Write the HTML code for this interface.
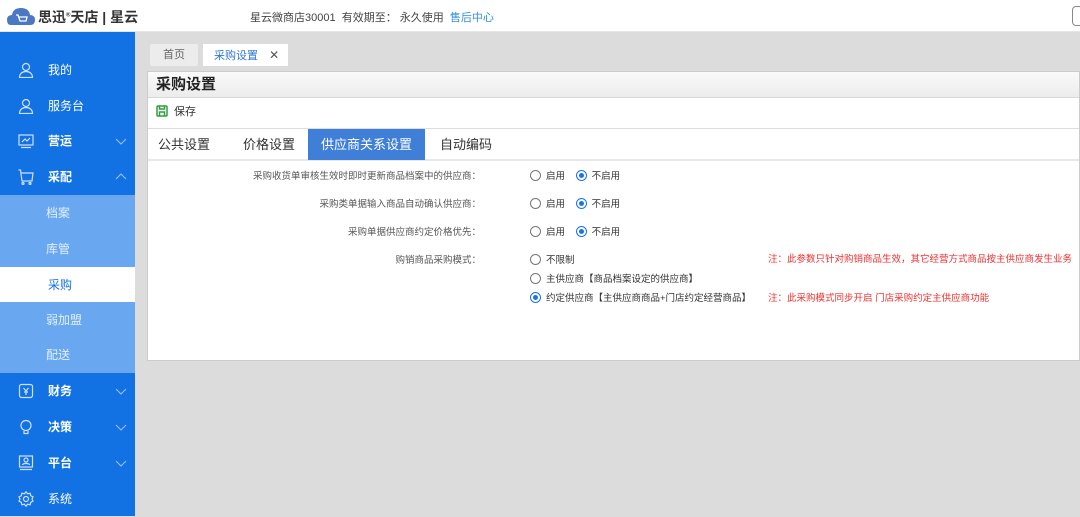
<!DOCTYPE html>
<html><head><meta charset="utf-8"><style>
*{margin:0;padding:0;box-sizing:border-box}
body{width:1080px;height:516px;overflow:hidden;background:#dcdcdc;font-family:"Liberation Sans","Noto Sans CJK SC",sans-serif;position:relative}
.hdr{position:absolute;left:0;top:0;width:1080px;height:32px;background:#fff;border-bottom:1px solid #e6e6e6}
.logo{position:absolute;left:7px;top:7px;font-size:14px;font-weight:bold;color:#333;display:flex;align-items:center;gap:3px}
.info{position:absolute;left:250px;top:9px;font-size:11px;color:#444}
.info span{color:#2f8fd8}
.side{position:absolute;left:0;top:32px;width:135px;height:484px;background:#1272e4}
.it{position:absolute;left:0;width:135px;height:36px;color:#fff;font-size:12px;line-height:36px}
.it .t{position:absolute;left:48px}
.it.sub{background:#69a8f0;color:#e3efff}
.it.sub .t{left:46px}
.it.act{background:#fff;color:#1272e4}
.it.b .t{font-weight:bold}
.ic{position:absolute;left:18px;top:10px;width:16px;height:16px}
.ar{position:absolute;left:115px;top:12px;width:12px;height:12px}
.tab{position:absolute;top:44px;height:22px;font-size:11px;line-height:22px;text-align:center}
.panel{position:absolute;left:147px;top:71px;width:933px;height:290px;background:#fff;border:1px solid #ccc}
.title{height:26px;background:linear-gradient(#fafafa,#ececec);border-bottom:1px solid #d8d8d8;font-size:15px;font-weight:bold;color:#222;padding-left:8px;line-height:26px}
.save{height:31px;border-bottom:1px solid #ddd;font-size:11px;color:#333;line-height:28px;padding-left:26px;position:relative}
.tabs{height:32px;border-bottom:2px solid #e8e8e8;position:relative}
.tabs div{position:absolute;top:0;height:31px;line-height:31px;font-size:13px;color:#333;text-align:center}
.lbl{position:absolute;right:600px;font-size:9.5px;color:#555;text-align:right;white-space:nowrap}
.r{position:absolute;font-size:9.5px;color:#333;white-space:nowrap}
.rd{display:inline-block;width:11px;height:11px;border:1px solid #777;border-radius:50%;vertical-align:-2px;margin-right:5px;background:#fff;position:relative}
.rd.on{border-color:#1a73e8}
.rd.on::after{content:"";position:absolute;left:2px;top:2px;width:5px;height:5px;border-radius:50%;background:#1a73e8}
.note{position:absolute;font-size:9.5px;color:#f03030;white-space:nowrap}
</style></head><body>
<div class="hdr">
 <div class="logo"><svg width="28" height="20" viewBox="0 0 28 20"><path d="M4 18 Q0 18 0 13 Q0 8 5 8 Q6 1 14 1 Q22 1 23 8 Q28 8 28 13 Q28 18 23 18Z" fill="#4a78c4"/><path d="M9 8h2l2 6h6l1-4h-8" stroke="#fff" stroke-width="1.3" fill="none"/></svg><span>思迅<sup style="font-size:6px">®</sup>天店 | 星云</span></div>
 <div class="info">星云微商店30001 &nbsp;有效期至： 永久使用 &nbsp;<span>售后中心</span></div>
 <div style="position:absolute;left:1072px;top:6px;width:12px;height:20px;border:1px solid #888;border-radius:4px"></div>
</div>
<div class="side">
 <div class="it" style="top:20px"><svg class="ic" viewBox="0 0 16 16" fill="none" stroke="#cfe0ff" stroke-width="1.2"><circle cx="8" cy="5" r="3.5"/><path d="M1.5 15.5c0-4 3-6 6.5-6s6.5 2 6.5 6z"/></svg><span class="t">我的</span></div>
 <div class="it" style="top:56px"><svg class="ic" viewBox="0 0 16 16" fill="none" stroke="#cfe0ff" stroke-width="1.2"><circle cx="8" cy="5" r="3.5"/><path d="M1.5 15.5c0-4 3-6 6.5-6s6.5 2 6.5 6z"/></svg><span class="t">服务台</span></div>
 <div class="it b" style="top:91px"><svg class="ic" viewBox="0 0 16 16" fill="none" stroke="#cfe0ff" stroke-width="1.2"><rect x="1" y="2" width="14" height="10"/><path d="M4 9l3-3 2 2 3-3M3 14.5h10"/></svg><span class="t">营运</span><svg class="ar" viewBox="0 0 12 12" fill="none" stroke="#9cc3f5"><path d="M1 4l5 5 5-5"/></svg></div>
 <div class="it b" style="top:127px"><svg class="ic" viewBox="0 0 16 16" fill="none" stroke="#cfe0ff" stroke-width="1.2"><path d="M0.5 1h2l1.5 11h10l1-8H3"/><circle cx="5" cy="14.5" r="1"/><circle cx="12" cy="14.5" r="1"/></svg><span class="t">采配</span><svg class="ar" viewBox="0 0 12 12" fill="none" stroke="#9cc3f5"><path d="M1 8l5-5 5 5"/></svg></div>
 <div style="position:absolute;top:163px;left:0;width:135px;height:178px;background:#69a8f0"></div>
 <div class="it sub" style="top:163px"><span class="t">档案</span></div>
 <div class="it sub" style="top:199px"><span class="t">库管</span></div>
 <div class="it act" style="top:235px"><span class="t">采购</span></div>
 <div class="it sub" style="top:270px"><span class="t">弱加盟</span></div>
 <div class="it sub" style="top:305px"><span class="t">配送</span></div>
 <div class="it b" style="top:341px"><svg class="ic" viewBox="0 0 16 16" fill="none" stroke="#cfe0ff" stroke-width="1.2"><rect x="1.5" y="1.5" width="13" height="13" rx="2"/><path d="M5.5 5l2.5 3 2.5-3M8 8v4M6 9h4"/></svg><span class="t">财务</span><svg class="ar" viewBox="0 0 12 12" fill="none" stroke="#9cc3f5"><path d="M1 4l5 5 5-5"/></svg></div>
 <div class="it b" style="top:377px"><svg class="ic" viewBox="0 0 16 16" fill="none" stroke="#cfe0ff" stroke-width="1.2"><circle cx="8" cy="6.5" r="5"/><path d="M6 12v2.5h4V12"/></svg><span class="t">决策</span><svg class="ar" viewBox="0 0 12 12" fill="none" stroke="#9cc3f5"><path d="M1 4l5 5 5-5"/></svg></div>
 <div class="it b" style="top:413px"><svg class="ic" viewBox="0 0 16 16" fill="none" stroke="#cfe0ff" stroke-width="1.2"><rect x="1.5" y="1" width="13" height="11"/><circle cx="8" cy="5" r="2"/><path d="M4.5 10c0-2 7-2 7 0M2 14.5h12"/></svg><span class="t">平台</span><svg class="ar" viewBox="0 0 12 12" fill="none" stroke="#9cc3f5"><path d="M1 4l5 5 5-5"/></svg></div>
 <div class="it" style="top:449px"><svg class="ic" viewBox="0 0 16 16" fill="none" stroke="#cfe0ff" stroke-width="1.2"><circle cx="8" cy="8" r="2.5"/><path d="M8 0.8l1.6 2 2.5-.6.6 2.5 2.3 1.2-1 2.1 1 2.1-2.3 1.2-.6 2.5-2.5-.6L8 15.2l-1.6-2-2.5.6-.6-2.5-2.3-1.2 1-2.1-1-2.1 2.3-1.2.6-2.5 2.5.6z"/></svg><span class="t">系统</span></div>
</div>
<div class="tab" style="left:150px;width:48px;background:#ececec;color:#666;border-radius:2px">首页</div>
<div class="tab" style="left:203px;width:85px;background:#fff;color:#2f78d8;text-align:left;padding-left:11px">采购设置 <span style="color:#555;margin-left:8px;font-size:12px">✕</span></div>
<div class="panel">
 <div class="title">采购设置</div>
 <div class="save"><svg style="position:absolute;left:8px;top:7px" width="12" height="12" viewBox="0 0 12 12" fill="none" stroke="#2e9e3e" stroke-width="1.5"><rect x="1" y="1" width="10" height="10" rx="1"/><path d="M3.5 1v3h5V1M3.5 11V7h5v4"/></svg>保存</div>
 <div class="tabs">
  <div style="left:6px;width:60px">公共设置</div>
  <div style="left:86px;width:70px">价格设置</div>
  <div style="left:160px;width:117px;background:#3f7fd8;color:#fff">供应商关系设置</div>
  <div style="left:286px;width:64px">自动编码</div>
 </div>
 <div class="lbl" style="top:96px;right:598px">采购收货单审核生效时即时更新商品档案中的供应商：</div>
 <div class="r" style="left:382px;top:96px"><i class="rd"></i>启用 &nbsp;&nbsp;&nbsp;<i class="rd on"></i>不启用</div>
 <div class="lbl" style="top:124px;right:598px">采购类单据输入商品自动确认供应商：</div>
 <div class="r" style="left:382px;top:124px"><i class="rd"></i>启用 &nbsp;&nbsp;&nbsp;<i class="rd on"></i>不启用</div>
 <div class="lbl" style="top:152px;right:598px">采购单据供应商约定价格优先：</div>
 <div class="r" style="left:382px;top:152px"><i class="rd"></i>启用 &nbsp;&nbsp;&nbsp;<i class="rd on"></i>不启用</div>
 <div class="lbl" style="top:180px;right:598px">购销商品采购模式：</div>
 <div class="r" style="left:382px;top:180px"><i class="rd"></i>不限制</div>
 <div class="r" style="left:382px;top:199px"><i class="rd"></i>主供应商【商品档案设定的供应商】</div>
 <div class="r" style="left:382px;top:218px"><i class="rd on"></i>约定供应商【主供应商商品+门店约定经营商品】</div>
 <div class="note" style="left:620px;top:179px">注：此参数只针对购销商品生效，其它经营方式商品按主供应商发生业务</div>
 <div class="note" style="left:620px;top:218px">注：此采购模式同步开启 门店采购约定主供应商功能</div>
</div>
</body></html>
